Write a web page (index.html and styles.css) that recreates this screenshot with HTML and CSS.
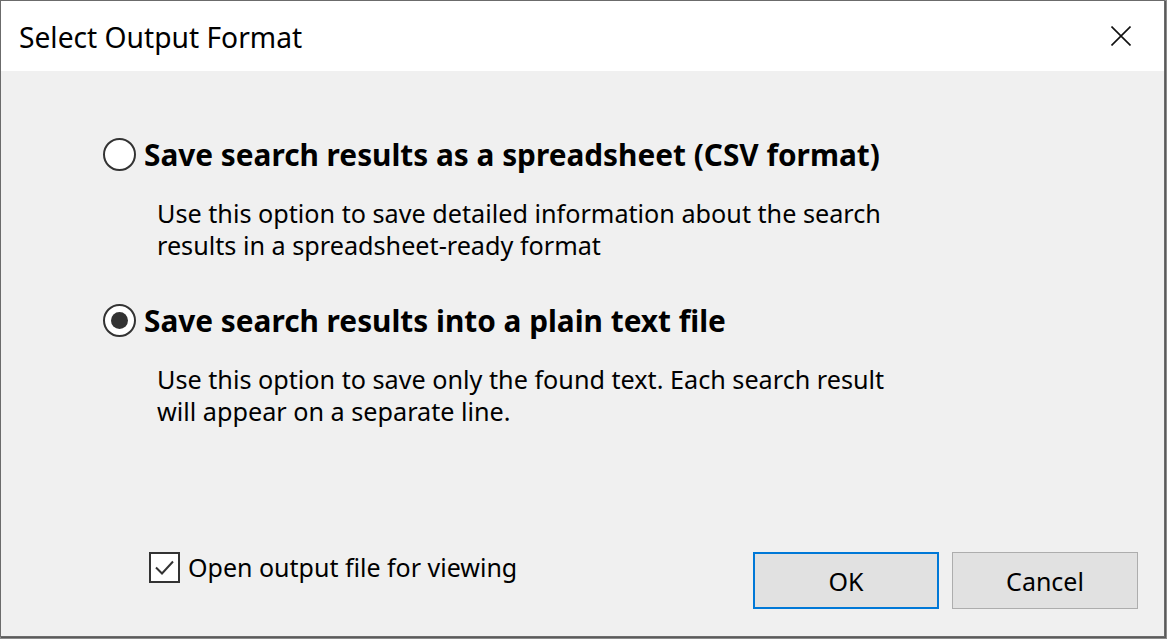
FILE: index.html
```html
<!DOCTYPE html>
<html>
<head>
<meta charset="utf-8">
<title>Select Output Format</title>
<link rel="stylesheet" href="styles.css">
</head>
<body>
<div class="dialog">
  <div class="titlebar">
    <span class="title">Select Output Format</span>
    <span class="close">
      <svg width="20" height="20" viewBox="0 0 20 20"><path d="M0.5 0.5 L19.5 19.5 M19.5 0.5 L0.5 19.5" stroke="#111" stroke-width="1.6" fill="none"/></svg>
    </span>
  </div>
  <div class="content">
    <div class="options">
      <div class="option">
        <div class="opt-head"><span class="radio"></span><span class="opt-label">Save search results as a spreadsheet (CSV format)</span></div>
        <p class="desc">Use this option to save detailed information about the search<br>results in a spreadsheet-ready format</p>
      </div>
      <div class="option">
        <div class="opt-head"><span class="radio checked"></span><span class="opt-label">Save search results into a plain text file</span></div>
        <p class="desc">Use this option to save only the found text. Each search result<br>will appear on a separate line.</p>
      </div>
    </div>
    <div class="footer">
      <div class="check">
        <span class="box"><svg width="23" height="23" viewBox="0 0 23 23"><path d="M3 11.5 L9 17.5 L20 5.5" stroke="#333" stroke-width="2" fill="none"/></svg></span>
        <span class="check-label">Open output file for viewing</span>
      </div>
      <div class="buttons">
        <span class="btn ok">OK</span>
        <span class="btn">Cancel</span>
      </div>
    </div>
  </div>
</div>
</body>
</html>
```
FILE: styles.css
```css
html, body {
  margin: 0;
  padding: 0;
}
body {
  width: 1167px;
  height: 639px;
  background: #8c8c8c;
  font-family: "Noto Sans", "Open Sans", sans-serif;
  color: #000;
  overflow: hidden;
}
.dialog {
  width: 1163px;
  height: 635px;
  border: 1px solid #6b6b6b;
  box-shadow: 1px 1px 0 #5a5a5a;
  background: #f0f0f0;
  display: flex;
  flex-direction: column;
}
.titlebar {
  height: 70px;
  background: #fff;
  display: flex;
  align-items: center;
  justify-content: space-between;
  padding: 0 33px 0 18px;
  flex: none;
}
.title {
  font-size: 28.2px;
  margin-top: 2px;
}
.close {
  display: flex;
  width: 20px;
  height: 20px;
}
.content {
  flex: 1;
  display: flex;
  flex-direction: column;
  padding: 63px 26px 27px 102px;
}
.option {
  margin-bottom: 39px;
}
.option:last-child {
  margin-bottom: 0;
}
.opt-head {
  display: flex;
  align-items: center;
  height: 40px;
  gap: 8px;
}
.radio {
  width: 29px;
  height: 29px;
  border: 2px solid #333;
  border-radius: 50%;
  background: #fff;
  flex: none;
  display: flex;
  align-items: center;
  justify-content: center;
}
.radio.checked::after {
  content: "";
  width: 17px;
  height: 17px;
  border-radius: 50%;
  background: #333;
}
.opt-label {
  font-weight: bold;
  font-size: 29.8px;
}
.desc {
  margin: 23px 0 0 54px;
  font-size: 25.2px;
  line-height: 32px;
}
.footer {
  margin-top: auto;
  display: flex;
  justify-content: space-between;
  align-items: flex-start;
  padding-left: 46px;
}
.check {
  display: flex;
  align-items: center;
  gap: 8px;
  margin-top: -2px;
}
.box {
  width: 27px;
  height: 27px;
  border: 2px solid #333;
  background: #fff;
  display: flex;
  align-items: center;
  justify-content: center;
}
.check-label {
  font-size: 25px;
}
.buttons {
  display: flex;
  gap: 13px;
}
.btn {
  width: 184px;
  height: 55px;
  border: 1px solid #adadad;
  background: #e1e1e1;
  display: flex;
  align-items: center;
  justify-content: center;
  font-size: 25px;
}
.btn.ok {
  border: 2px solid #0078d7;
  width: 182px;
  height: 53px;
}
```
